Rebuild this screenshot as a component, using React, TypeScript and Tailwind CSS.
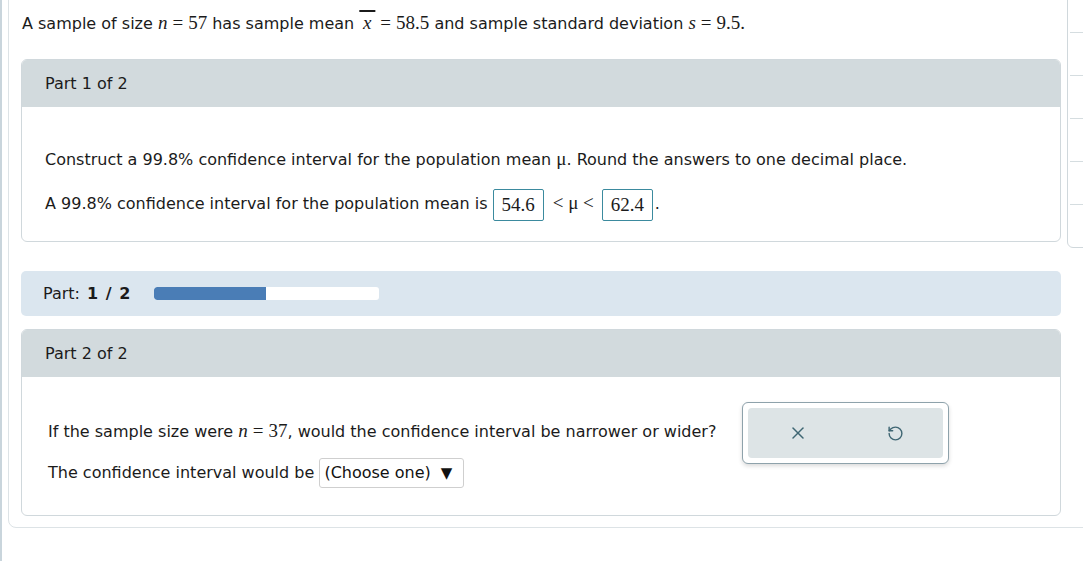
import { X, RotateCcw } from "lucide-react";

const sans = "font-['DejaVu_Sans','Verdana',sans-serif]";
const serif = "font-['Liberation_Serif','Times_New_Roman',serif]";

function M({ children }: { children: React.ReactNode }) {
  return <span className={`${serif} text-[19px]`}>{children}</span>;
}

function Eq({ v, rhs }: { v: React.ReactNode; rhs: string }) {
  return (
    <M>
      {v}
      <span className="mx-[5px]">=</span>
      {rhs}
    </M>
  );
}

function AnswerBox({ value }: { value: string }) {
  return (
    <span
      className={`${serif} inline-flex items-center justify-center align-middle h-[32px] w-[51px] border border-[#3b8a9e] rounded-[2px] text-[19px] leading-none`}
    >
      {value}
    </span>
  );
}

function CardHeader({ title }: { title: string }) {
  return (
    <div className="h-[47px] bg-[#d2dadd] rounded-t-[5px] flex items-center pl-[23px]">
      {title}
    </div>
  );
}

export default function App() {
  return (
    <div
      className={`${sans} text-[16px] text-[#1b1b1b] w-[1083px] h-[561px] overflow-hidden bg-white border-l-2 border-[#c9d5dc]`}
    >
      <div className="ml-[6px] mt-[-12px] w-[1100px] h-[540px] border border-[#dde3e6] rounded-bl-[8px] flex">
        {/* main column */}
        <div className="w-[1054px] pl-[12px] flex flex-col">
          <p className="h-[60px] pt-[22px] pl-[1px] leading-[24px] shrink-0 whitespace-nowrap">
            A sample of size <Eq v={<i>n</i>} rhs="57" /> has sample mean{" "}
            <Eq v={<i className="overline decoration-[1.5px]">&thinsp;x&thinsp;</i>} rhs="58.5" /> and sample standard deviation{" "}
            <Eq v={<i>s</i>} rhs="9.5." />
          </p>

          {/* Part 1 */}
          <div className="mt-[10px] h-[183px] border border-[#d0d8dc] rounded-[6px] flex flex-col">
            <CardHeader title="Part 1 of 2" />
            <div className="pl-[23px] pt-[40px]">
              <p className="leading-[24px] whitespace-nowrap">
                Construct a 99.8% confidence interval for the population mean <M>μ</M>. Round the answers to one decimal place.
              </p>
              <p className="mt-[15px] leading-[32px] whitespace-nowrap">
                A 99.8% confidence interval for the population mean is{" "}
                <AnswerBox value="54.6" />
                <M>
                  <span className="ml-[9px] mr-[8px]">&lt; μ &lt;</span>
                </M>
                <AnswerBox value="62.4" />
                <span className="ml-[2px]">.</span>
              </p>
            </div>
          </div>

          {/* progress */}
          <div className="mt-[29px] h-[45px] bg-[#dbe6ef] rounded-[5px] flex items-center pl-[22px]">
            <span>
              Part: <b className="ml-[2px] tracking-[1px]">1 / 2</b>
            </span>
            <div className="ml-[23px] w-[225px] h-[13px] bg-white rounded-[3px] overflow-hidden">
              <div className="h-full w-[112px] bg-[#4a7db6] rounded-l-[3px]" />
            </div>
          </div>

          {/* Part 2 */}
          <div className="mt-[13px] h-[187px] border border-[#d0d8dc] rounded-[6px] flex flex-col">
            <CardHeader title="Part 2 of 2" />
            <div className="flex pt-[26px] pl-[26px]">
              <div className="w-[694px] pt-[16px]">
                <p className="leading-[24px] whitespace-nowrap">
                  If the sample size were <Eq v={<i>n</i>} rhs="37" />, would the confidence interval be narrower or wider?
                </p>
                <p className="mt-[14px] h-[30px] flex items-center whitespace-nowrap">
                  The confidence interval would be&nbsp;
                  <span className="h-[30px] w-[145px] border border-[#cfcfcf] rounded-[3px] flex items-center pl-[4px] gap-[10px] text-[16px] text-[#111]">
                    (Choose one) <span className="text-[15px]">▼</span>
                  </span>
                </p>
              </div>
              <div className="-mt-[1px] w-[207px] h-[62px] border border-[#8ea2ab] rounded-[6px] bg-white p-[5px] shadow-[0_2px_4px_rgba(0,0,0,0.15)]">
                <div className="h-full bg-[#dde4e6] rounded-[4px] flex items-center justify-around">
                  <X size={20} strokeWidth={1.8} className="text-[#3f6673]" />
                  <RotateCcw size={17} strokeWidth={2} className="text-[#3f6673]" />
                </div>
              </div>
            </div>
          </div>
        </div>

        {/* side panel */}
        <div className="ml-[6px] w-[40px] h-[259px] border border-[#d0d8dc] rounded-bl-[6px] flex flex-col pt-[42px] pl-[2px]">
          {[0, 1, 2, 3, 4].map((i) => (
            <div key={i} className="h-[43px] border-t border-[#d5dde0]" />
          ))}
        </div>
      </div>
    </div>
  );
}
